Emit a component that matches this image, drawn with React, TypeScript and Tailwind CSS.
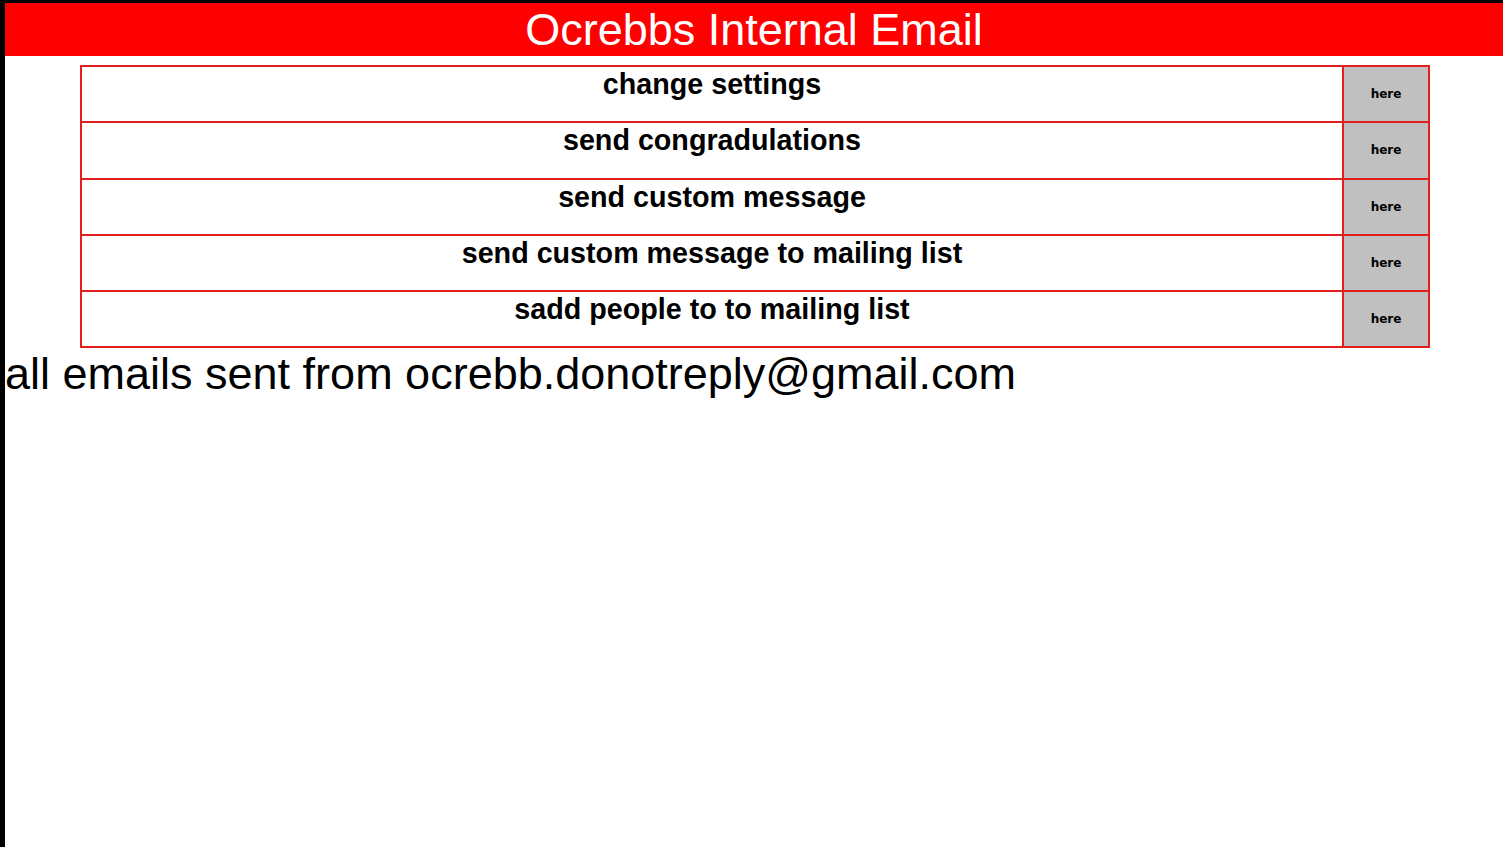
import React from "react";

const rows = [
  "change settings",
  "send congradulations",
  "send custom message",
  "send custom message to mailing list",
  "sadd people to to mailing list",
];

export default function App() {
  return (
    <div
      className="min-h-[847px] border-t-[3px] border-l-[5px] border-black bg-white text-black"
      style={{ fontFamily: '"Liberation Sans", Arial, sans-serif' }}
    >
      <h1 className="m-0 h-[53px] bg-[#ff0000] text-center text-[45px] font-normal leading-[53px] text-white">
        Ocrebbs Internal Email
      </h1>
      <table className="mt-[9px] ml-[75px] w-[1350px] border-collapse">
        <tbody>
          {rows.map((r) => (
            <tr key={r} className="h-[56.3px]">
              <td className="border-2 border-[#e41e1e] p-0 pt-[1px] text-center align-top text-[28.7px] font-bold leading-[32px]">
                {r}
              </td>
              <td
                className="w-[86px] border-2 border-[#e41e1e] bg-[#c0c0c0] p-0 text-center align-middle text-[12px] font-bold"
                style={{ fontFamily: '"DejaVu Sans", Verdana, sans-serif' }}
              >
                here
              </td>
            </tr>
          ))}
        </tbody>
      </table>
      <p className="m-0 text-[45px] leading-[52px]">all emails sent from ocrebb.donotreply@gmail.com</p>
    </div>
  );
}
